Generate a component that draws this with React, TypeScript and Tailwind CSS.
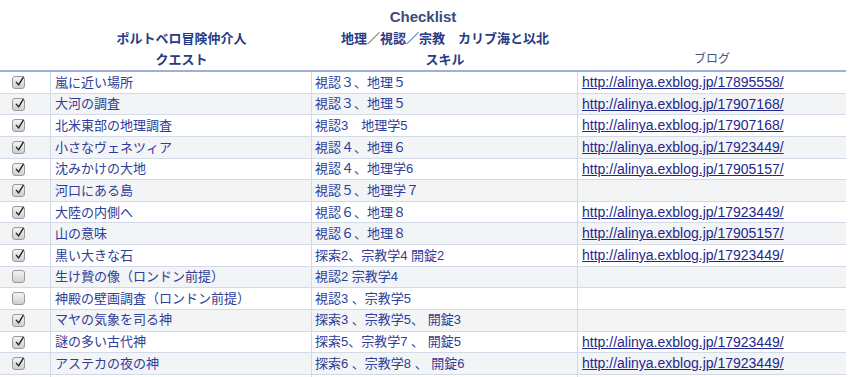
import React from "react";

type Row = {
  done: boolean;
  quest: string;
  skill: string;
  blog?: string;
};

const BASE = "http://alinya.exblog.jp/";

const ROWS: Row[] = [
  { done: true, quest: "嵐に近い場所", skill: "視認３、地理５", blog: BASE + "17895558/" },
  { done: true, quest: "大河の調査", skill: "視認３、地理５", blog: BASE + "17907168/" },
  { done: true, quest: "北米東部の地理調査", skill: "視認3　地理学5", blog: BASE + "17907168/" },
  { done: true, quest: "小さなヴェネツィア", skill: "視認４、地理６", blog: BASE + "17923449/" },
  { done: true, quest: "沈みかけの大地", skill: "視認４、地理学6", blog: BASE + "17905157/" },
  { done: true, quest: "河口にある島", skill: "視認５、地理学７" },
  { done: true, quest: "大陸の内側へ", skill: "視認６、地理８", blog: BASE + "17923449/" },
  { done: true, quest: "山の意味", skill: "視認６、地理８", blog: BASE + "17905157/" },
  { done: true, quest: "黒い大きな石", skill: "探索2、宗教学4 開錠2", blog: BASE + "17923449/" },
  { done: false, quest: "生け贄の像（ロンドン前提）", skill: "視認2 宗教学4" },
  { done: false, quest: "神殿の壁画調査（ロンドン前提）", skill: "視認3 、宗教学5" },
  { done: true, quest: "マヤの気象を司る神", skill: "探索3 、宗教学5、 開錠3" },
  { done: true, quest: "謎の多い古代神", skill: "探索5、宗教学7 、 開錠5", blog: BASE + "17923449/" },
  { done: true, quest: "アステカの夜の神", skill: "探索6 、宗教学8 、 開錠6", blog: BASE + "17923449/" },
  { done: true, quest: "", skill: "" },
];

function Checkbox({ checked }: { checked: boolean }) {
  return (
    <span className="relative inline-block w-[13px] h-[13px] rounded-[3px] border border-[#9a9a9a] bg-gradient-to-b from-[#f4f4f4] to-[#cfcfcf]">
      {checked && (
        <svg
          viewBox="0 0 13 13"
          className="absolute left-[1px] top-[-2px] w-[12px] h-[13px]"
        >
          <path
            d="M2.6 7.4 L5 10.2 L10 2"
            fill="none"
            stroke="#222222"
            strokeWidth="1.5"
            strokeLinecap="round"
            strokeLinejoin="round"
          />
        </svg>
      )}
    </span>
  );
}

export default function App() {
  return (
    <div className="w-[850px] h-[377px] overflow-hidden bg-white font-['Liberation_Sans','Noto_Sans_CJK_JP',sans-serif] text-[13px]">
      <div className="w-[846px]">
        {/* Header */}
        <div className="pt-[6px] leading-[22px] text-center font-bold text-[15px] text-[#3b4a7c]">
          Checklist
        </div>
        <div className="grid grid-cols-[51px_261px_266px_268px] leading-[21px] font-bold text-[#273a85]">
          <div />
          <div className="text-center">ポルトベロ冒険仲介人</div>
          <div className="text-center whitespace-nowrap">地理／視認／宗教　カリブ海と以北</div>
          <div />
        </div>
        <div className="grid grid-cols-[51px_261px_266px_268px] leading-[21px] text-[#273a85]">
          <div />
          <div className="text-center font-bold">クエスト</div>
          <div className="text-center font-bold">スキル</div>
          <div className="text-center text-[12px] text-[#4b5577]">ブログ</div>
        </div>

        {/* Table */}
        <div className="border-t-2 border-[#9eb0d9]">
          {ROWS.map((r, i) => (
            <div
              key={i}
              className={`grid grid-cols-[51px_261px_266px_268px] h-[21.64px] border-b border-[#d2d9e7] text-[#2d3d98] ${
                i % 2 === 0 ? "bg-white" : "bg-[#f3f4f6]"
              }`}
            >
              <div className="flex items-center pl-[12px] border-r border-[#d2d9e7]">
                <Checkbox checked={r.done} />
              </div>
              <div className="flex items-center pl-[4px] border-r border-[#d2d9e7] whitespace-nowrap">
                {r.quest}
              </div>
              <div className="flex items-center pl-[3px] border-r border-[#d2d9e7] whitespace-pre">
                {r.skill}
              </div>
              <div className="flex items-center pl-[4px]">
                {r.blog && (
                  <a href="#" className="underline text-[14px] text-[#24288c]">
                    {r.blog}
                  </a>
                )}
              </div>
            </div>
          ))}
        </div>
      </div>
    </div>
  );
}
